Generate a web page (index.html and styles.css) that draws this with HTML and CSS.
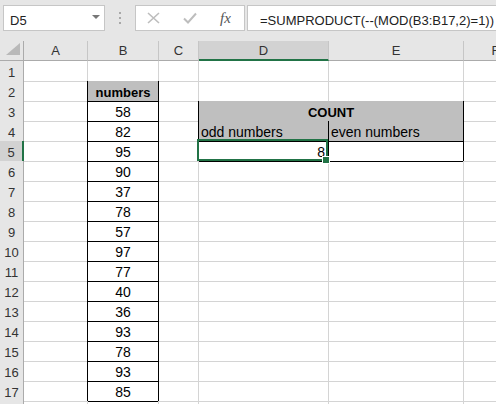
FILE: index.html
```html
<!DOCTYPE html>
<html lang="en">
<head>
  <meta charset="UTF-8">
  <meta name="viewport" content="width=device-width, initial-scale=1.0">
  <title>COUNT odd numbers</title>
  <link rel="stylesheet" href="styles.css">
</head>
<body>
  <div class="toolbar">
    <div class="namebox">
      <span class="ref">D5</span>
      <span class="caret"></span>
    </div>
    <div class="grip"><i></i><i></i><i></i></div>
    <div class="fxbox">
      <svg class="icon-x" width="13" height="12" viewBox="0 0 13 12">
        <path d="M1 1 L12 11 M12 1 L1 11" stroke="#bdbdbd" stroke-width="1.6" fill="none"/>
      </svg>
      <svg class="icon-ok" width="14" height="12" viewBox="0 0 14 12">
        <path d="M1 6.5 L5 10.5 L13 1.5" stroke="#bdbdbd" stroke-width="2" fill="none"/>
      </svg>
      <span class="fx">fx</span>
    </div>
    <div class="formula">=SUMPRODUCT(--(MOD(B3:B17,2)=1))</div>
  </div>

  <div class="sheet" id="sheet">
    <div class="row">
      <div class="colhead corner">
        <svg width="23" height="19" viewBox="0 0 23 19"><polygon points="20,2 20,14 6,14" fill="#b9b9b9"/></svg>
      </div>
      <div class="colhead">A</div>
      <div class="colhead">B</div>
      <div class="colhead">C</div>
      <div class="colhead sel">D</div>
      <div class="colhead">E</div>
      <div class="colhead">F</div>
    </div>
  </div>

  <script>
    const nums = [58, 82, 95, 90, 37, 78, 57, 97, 77, 40, 36, 93, 78, 93, 85];
    const sheet = document.getElementById('sheet');

    function cell(row, cls, text) {
      const d = document.createElement('div');
      d.className = cls;
      if (text !== undefined) d.textContent = text;
      row.appendChild(d);
      return d;
    }

    for (let r = 1; r <= 18; r++) {
      const row = document.createElement('div');
      row.className = 'row';
      cell(row, r === 5 ? 'rh sel' : 'rh', r);

      // A
      cell(row, 'cell' + (r >= 2 && r <= 17 ? ' edge-r' : ''));

      // B
      if (r === 1) cell(row, 'cell edge-b');
      else if (r === 2) cell(row, 'cell box fill head', 'numbers');
      else if (r <= 17) cell(row, 'cell box num', nums[r - 3]);
      else cell(row, 'cell');

      // C
      cell(row, 'cell' + (r >= 3 && r <= 5 ? ' edge-r' : ''));

      // D, E
      if (r === 2) {
        cell(row, 'cell edge-b');
        cell(row, 'cell edge-b');
      } else if (r === 3) {
        cell(row, 'cell box fill head merge', 'COUNT');
      } else if (r === 4) {
        cell(row, 'cell box fill', 'odd numbers');
        cell(row, 'cell box fill', 'even numbers');
      } else if (r === 5) {
        cell(row, 'cell box right active', '8');
        cell(row, 'cell box');
      } else {
        cell(row, 'cell');
        cell(row, 'cell');
      }

      // F
      cell(row, 'cell');
      sheet.appendChild(row);
    }
  </script>
</body>
</html>
```

FILE: styles.css
```css
body {
  margin: 0;
  padding: 0;
  width: 496px;
  height: 404px;
  overflow: hidden;
  background-color: #fff;
  font-family: "Liberation Sans", Arial, sans-serif;
  color: #000;
}

/* formula bar */
.toolbar {
  display: flex;
  height: 41px;
  padding-top: 5px;
  box-sizing: border-box;
  background-color: #e6e6e6;
}
.namebox {
  display: flex;
  align-items: flex-start;
  margin-left: 3px;
  width: 102px;
  height: 26px;
  box-sizing: border-box;
  border: 1px solid #c6c6c6;
  background-color: #fff;
}
.ref {
  padding: 5px 0 0 6px;
  font-size: 13px;
  line-height: 19px;
  color: #222;
}
.caret {
  margin: 9px 4px 0 auto;
  width: 0;
  height: 0;
  border-left: 4px solid transparent;
  border-right: 4px solid transparent;
  border-top: 4px solid #777;
}
.grip {
  display: flex;
  flex-direction: column;
  align-items: center;
  gap: 3px;
  width: 30px;
  padding-top: 7px;
  box-sizing: border-box;
}
.grip i {
  display: block;
  width: 2px;
  height: 2px;
  background-color: #a8a8a8;
}
.fxbox {
  display: flex;
  align-items: center;
  width: 110px;
  height: 26px;
  padding-left: 11px;
  box-sizing: border-box;
  border: 1px solid #c6c6c6;
  background-color: #fff;
}
.icon-x {
  margin-right: 23px;
}
.icon-ok {
  margin-right: 23px;
}
.fx {
  font-family: "Liberation Serif", "Times New Roman", serif;
  font-style: italic;
  font-size: 15px;
  color: #555;
}
.formula {
  flex: 1;
  margin-left: 2px;
  height: 26px;
  padding: 5px 0 0 12px;
  box-sizing: border-box;
  border: 1px solid #c6c6c6;
  border-right: none;
  background-color: #fff;
  font-size: 13px;
  line-height: 19px;
  white-space: nowrap;
  color: #222;
}

/* grid */
.sheet {
  width: 496px;
  height: 363px;
  overflow: hidden;
}
.row {
  display: grid;
  grid-template-columns: 24px 64px 71px 40px 130px 135px 64px;
  height: 20px;
}
.colhead {
  background-color: #e6e6e6;
  border-right: 1px solid #c6c6c6;
  border-bottom: 1px solid #ababab;
  box-sizing: border-box;
  padding-top: 2px;
  font-size: 13px;
  line-height: 16px;
  text-align: center;
  color: #333;
}
.colhead.corner {
  padding: 0;
  border-right-color: #ababab;
}
.colhead.corner svg {
  display: block;
}
.colhead.sel {
  background-color: #d2d2d2;
  border-bottom: 2px solid #217346;
}
.rh {
  background-color: #e6e6e6;
  border-right: 1px solid #ababab;
  border-bottom: 1px solid #c6c6c6;
  box-sizing: border-box;
  padding-top: 4px;
  font-size: 13px;
  line-height: 16px;
  text-align: center;
  color: #333;
}
.rh.sel {
  background-color: #d2d2d2;
  border-right: 2px solid #217346;
}
.cell {
  border-right: 1px solid #d4d4d4;
  border-bottom: 1px solid #d4d4d4;
  box-sizing: border-box;
  padding: 4px 2px 0;
  font-size: 14px;
  line-height: 15px;
  white-space: nowrap;
}
.edge-r {
  border-right-color: #000;
}
.edge-b {
  border-bottom-color: #000;
}
.box {
  border-right-color: #000;
  border-bottom-color: #000;
}
.fill {
  background-color: #bfbfbf;
}
.head {
  font-weight: bold;
  font-size: 13px;
  line-height: 16px;
  text-align: center;
}
.merge {
  grid-column: span 2;
}
.num {
  text-align: center;
}
.right {
  text-align: right;
  padding-right: 3px;
}

/* selected cell */
.active {
  position: relative;
  z-index: 1;
}
.active::after {
  content: "";
  position: absolute;
  left: -2px;
  top: -2px;
  right: 0;
  bottom: 0;
  border: 2px solid #217346;
}
.active::before {
  content: "";
  position: absolute;
  right: -2px;
  bottom: -3px;
  width: 6px;
  height: 6px;
  border: 1px solid #fff;
  background-color: #217346;
  z-index: 1;
}
```
